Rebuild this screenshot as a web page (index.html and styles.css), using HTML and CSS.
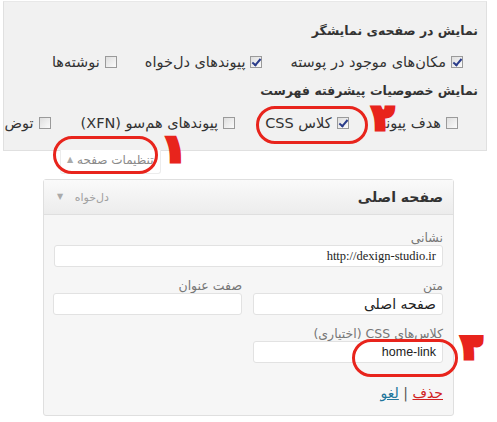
FILE: index.html
```html
<!DOCTYPE html>
<html lang="fa" dir="rtl">
<head>
<meta charset="utf-8">
<title>منو</title>
<link rel="stylesheet" href="styles.css">
</head>
<body>
<div class="screen">
  <div class="panel">
    <h5 class="panel-title">نمایش در صفحه‌ی نمایشگر</h5>
    <div class="opts">
      <label class="opt"><span class="cb checked"></span>مکان‌های موجود در پوسته</label>
      <label class="opt"><span class="cb checked"></span>پیوندهای دل‌خواه</label>
      <label class="opt"><span class="cb"></span>نوشته‌ها</label>
    </div>
    <h5 class="panel-title second">نمایش خصوصیات پیشرفته فهرست</h5>
    <div class="opts row2">
      <label class="opt"><span class="cb"></span>هدف پیوند</label>
      <label class="opt"><span class="cb checked"></span>کلاس CSS</label>
      <label class="opt"><span class="cb"></span>پیوندهای هم‌سو (XFN)</label>
      <label class="opt"><span class="cb"></span>توض</label>
    </div>
  </div>
  <div class="tabbar">
    <a class="tab">تنظیمات صفحه <span class="tri">▲</span></a>
  </div>
  <div class="card">
    <div class="card-head">
      <span class="card-title">صفحه اصلی</span>
      <span class="card-type">دل‌خواه <span class="tri">▼</span></span>
    </div>
    <div class="card-body">
      <div class="field">
        <span class="lbl">نشانی</span>
        <div class="input url">http://dexign-studio.ir</div>
      </div>
      <div class="cols">
        <div class="field">
          <span class="lbl">متن</span>
          <div class="input">صفحه اصلی</div>
        </div>
        <div class="field">
          <span class="lbl">صفت عنوان</span>
          <div class="input"></div>
        </div>
      </div>
      <div class="cols">
        <div class="field">
          <span class="lbl">کلاس‌های CSS (اختیاری)</span>
          <div class="input latin">home-link</div>
        </div>
      </div>
      <div class="actions">
        <a class="del">حذف</a> <span class="sep">|</span> <a class="cancel">لغو</a>
      </div>
    </div>
  </div>

  <div class="oval o1"></div>
  <div class="oval o2"></div>
  <div class="oval o3"></div>
  <span class="num n1">۱</span>
  <span class="num n2">۲</span>
  <span class="num n3">۳</span>
</div>
</body>
</html>
```
FILE: styles.css
```css
* { box-sizing: border-box; }
html, body { margin: 0; padding: 0; background: #fff; }
body {
  font-family: "DejaVu Sans", "Noto Sans", sans-serif;
  font-size: 12px;
  color: #333;
  width: 497px;
  height: 422px;
  overflow: hidden;
}
.screen { position: relative; width: 497px; height: 422px; }

.panel {
  margin: 1px 10px 0 3px;
  height: 150px;
  background: #f1f1f1;
  border: 1px solid #e0e0e0;
  border-top-color: #e8e8e8;
  padding: 18px 8px 0 0;
  overflow: hidden;
}
.panel-title {
  margin: 0;
  font-size: 12.5px;
  font-weight: bold;
  color: #333;
  line-height: 22px;
}
.panel-title.second { margin-top: 9px; }
.opts {
  display: flex;
  gap: 28px;
  margin-top: 11px;
  padding-right: 15px;
  white-space: nowrap;
}
.opts.row2 { margin-top: 12px; gap: 30px; padding-right: 20px; }
.opt {
  display: flex;
  align-items: center;
  gap: 5px;
  font-size: 14.5px;
  line-height: 18px;
  color: #333;
}
.cb {
  width: 12px;
  height: 12px;
  border: 1px solid #9a9a9a;
  background: linear-gradient(135deg, #dedede, #fbfbfb);
  flex: none;
  position: relative;
}
.cb.checked::after {
  content: "";
  position: absolute;
  left: 3px;
  top: 0px;
  width: 3px;
  height: 7px;
  border: solid #2a3c8a;
  border-width: 0 2px 2px 0;
  transform: rotate(40deg);
}

.tabbar {
  display: flex;
  justify-content: flex-end;
  padding-left: 60px;
  height: 28px;
}
.tab {
  margin-top: -1px;
  height: 24px;
  padding: 3px 6px 0 6px;
  color: #8a8a8a;
  font-size: 12px;
  background: #fff;
  border: 1px solid #ececec;
  border-top: none;
  border-radius: 0 0 3px 3px;
}
.tri { font-size: 8px; color: #aaa; vertical-align: 2px; }

.card {
  margin-right: 43px;
  width: 411px;
  border: 1px solid #dfdfdf;
  border-radius: 3px;
  background: #f6f6f6;
}
.card-head {
  height: 35px;
  display: flex;
  justify-content: space-between;
  align-items: center;
  padding: 0 10px 0 13px;
  background: linear-gradient(#fafafa, #ececec);
  border-bottom: 1px solid #dfdfdf;
}
.card-title { font-weight: bold; font-size: 14px; color: #333; }
.card-type { color: #a0a0a0; font-size: 11px; }
.card-type .tri { margin-right: 8px; }

.card-body { padding: 15px 10px 14px 10px; }
.field { display: flex; flex-direction: column; }
.lbl { display: block; color: #777; font-size: 12.5px; line-height: 15px; height: 15px; white-space: nowrap; }
.input {
  height: 22px;
  background: #fff;
  border: 1px solid #e2e2e2;
  border-radius: 3px;
  padding: 0 6px;
  line-height: 20px;
  font-size: 14px;
  color: #222;
}
.input.url {
  direction: ltr;
  text-align: right;
  font-family: "Liberation Serif", serif;
  font-size: 12.5px;
}
.input.latin {
  direction: ltr;
  text-align: right;
  font-family: "Liberation Sans", Arial, sans-serif;
  font-size: 12.5px;
}
.cols { display: grid; grid-template-columns: 190px 189px; gap: 11px; margin-top: 11px; }
.actions { margin-top: 22px; font-size: 14px; line-height: 16px; }
.del { color: #d02020; text-decoration: underline; }
.cancel { color: #21759b; text-decoration: underline; }
.sep { color: #555; }

.oval {
  position: absolute;
  border: 3px solid #e8241c;
  border-radius: 20px;
}
.o1 { left: 53px; top: 135px; width: 105px; height: 38px; }
.o2 { left: 256px; top: 105px; width: 112px; height: 38px; }
.o3 { left: 352px; top: 338px; width: 106px; height: 38px; }
.num {
  position: absolute;
  color: #e8241c;
  font-family: "DejaVu Sans", sans-serif;
  font-weight: bold;
  -webkit-text-stroke: 5px #e8241c;
  line-height: 1;
}
.n1 { left: 163px; top: 130px; font-size: 36px; }
.n2 { left: 373px; top: 100px; font-size: 33px; }
.n3 { left: 462px; top: 330px; font-size: 32px; }
```
